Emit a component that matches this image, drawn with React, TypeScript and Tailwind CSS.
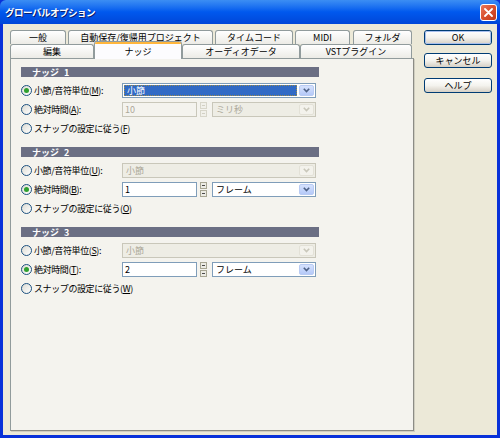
import React from "react";

const font = "font-['Noto_Sans_CJK_JP','Noto_Sans',sans-serif]";

function Radio({ checked }: { checked?: boolean }) {
  return (
    <span className="flex h-[11px] w-[11px] shrink-0 items-center justify-center rounded-full border border-[#1C5180] bg-linear-to-br from-[#DCDBD3] to-white">
      {checked && <span className="h-[5px] w-[5px] rounded-full bg-[#2FA12F]" />}
    </span>
  );
}

function Chevron({ disabled }: { disabled?: boolean }) {
  return (
    <svg width="7" height="5" viewBox="0 0 7 5">
      <path
        d="M0.8 0.8 L3.5 3.6 L6.2 0.8"
        fill="none"
        stroke={disabled ? "#C9C7BA" : "#4D6185"}
        strokeWidth="1.6"
      />
    </svg>
  );
}

function Select({
  value,
  width,
  disabled,
  focused,
}: {
  value: string;
  width: string;
  disabled?: boolean;
  focused?: boolean;
}) {
  return (
    <div
      className={`flex h-[15px] border ${width} ${
        disabled ? "border-[#C9C7BA] bg-[#EEEDE5]" : "border-[#7F9DB9] bg-white"
      }`}
    >
      <div className="flex flex-1 p-[1px]">
        <div
          className={`flex flex-1 items-center pl-[2px] text-[9px] leading-none ${
            focused
              ? "border border-dotted border-[#9C8B4A] bg-[#316AC5] text-white"
              : disabled
              ? "text-[#ACA899]"
              : "text-black"
          }`}
        >
          {value}
        </div>
      </div>
      <div
        className={`m-[1px] flex w-[15px] items-center justify-center rounded-[2px] border ${
          disabled
            ? "border-[#E3E1D7] bg-[#F3F2EC]"
            : "border-[#B9CBF3] bg-linear-to-b from-[#D6E2FD] to-[#B5C9F8]"
        }`}
      >
        <Chevron disabled={disabled} />
      </div>
    </div>
  );
}

function TextBox({ value, disabled }: { value: string; disabled?: boolean }) {
  return (
    <div
      className={`flex h-[15px] w-[75px] items-center border pl-[2px] text-[9px] leading-none ${
        disabled
          ? "border-[#C9C7BA] bg-[#F4F3EE] text-[#ACA899]"
          : "border-[#7F9DB9] bg-white text-black"
      }`}
    >
      {value}
    </div>
  );
}

function Spinner({ disabled }: { disabled?: boolean }) {
  const box = `flex h-[7px] w-[7px] items-center justify-center border ${
    disabled ? "border-[#D8D6CA] bg-[#F1F0EA]" : "border-[#A8A693] bg-[#ECEBE4]"
  }`;
  const mark = disabled ? "bg-[#D2D0C4]" : "bg-[#4A4A4A]";
  return (
    <div className="ml-[3px] flex flex-col gap-[1px]">
      <div className={box}>
        <span className={`h-[1px] w-[3px] ${mark}`} />
      </div>
      <div className={box}>
        <span className={`h-[1px] w-[3px] ${mark}`} />
      </div>
    </div>
  );
}

function Label({ text, k, tail }: { text: string; k: string; tail: string }) {
  return (
    <span className="ml-[2px] whitespace-nowrap text-[9px] leading-none tracking-[-0.4px] text-black">
      {text}(<u>{k}</u>){tail}
    </span>
  );
}

type NudgeProps = {
  n: number;
  keys: [string, string, string];
  unitDisabled?: boolean;
  unitFocused?: boolean;
  timeDisabled?: boolean;
  timeValue: string;
  timeUnit: string;
};

function NudgeSection({ n, keys, unitDisabled, unitFocused, timeDisabled, timeValue, timeUnit }: NudgeProps) {
  return (
    <div className="flex w-[298px] flex-col">
      <div className="flex h-[10px] items-center gap-[5px] bg-[#6B6F84] pl-[11px] text-[9px] font-bold leading-none text-white">
        <span>ナッジ</span>
        <span>{n}</span>
      </div>
      <div className="flex flex-col gap-[4px] pt-[6px]">
        <div className="flex h-[15px] items-center">
          <div className="flex w-[101px] items-center">
            <Radio checked={!unitDisabled} />
            <Label text="小節/音符単位" k={keys[0]} tail=":" />
          </div>
          <Select value="小節" width="w-[194px]" disabled={unitDisabled} focused={unitFocused} />
        </div>
        <div className="flex h-[15px] items-center">
          <div className="flex w-[101px] items-center">
            <Radio checked={!timeDisabled} />
            <Label text="絶対時間" k={keys[1]} tail=":" />
          </div>
          <TextBox value={timeValue} disabled={timeDisabled} />
          <Spinner disabled={timeDisabled} />
          <div className="ml-[5px]">
            <Select value={timeUnit} width="w-[104px]" disabled={timeDisabled} />
          </div>
        </div>
        <div className="flex h-[15px] items-center">
          <Radio />
          <Label text="スナップの設定に従う" k={keys[2]} tail="" />
        </div>
      </div>
    </div>
  );
}

function Tab({ label, width }: { label: string; width: string }) {
  return (
    <div
      className={`flex h-[14px] items-center justify-center rounded-t-[3px] border border-b-0 border-[#919B9C] bg-linear-to-b from-white to-[#ECEBE6] text-[9px] leading-none text-black ${width}`}
    >
      {label}
    </div>
  );
}

function Button({ label, isDefault }: { label: string; isDefault?: boolean }) {
  return (
    <div className="h-[15px] w-[68px] rounded-[3px] border border-[#003C74] bg-linear-to-b from-white via-[#F4F3EE] to-[#D6D0C5]">
      <div
        className={`flex h-full items-center justify-center rounded-[2px] text-[9px] leading-none text-black ${
          isDefault ? "border border-[#A8C0EE]" : ""
        }`}
      >
        {label}
      </div>
    </div>
  );
}

export default function App() {
  return (
    <div className={`flex h-[438px] w-[500px] flex-col bg-[#0831D9] ${font}`}>
      {/* Title bar */}
      <div className="flex h-[24px] items-center justify-between rounded-t-[6px] bg-linear-to-b from-[#3C8EF3] via-[#0058EE] to-[#0046D8] pl-[5px] pr-[3px]">
        <span className="text-[9.5px] font-bold tracking-[-0.5px] text-white [text-shadow:1px_1px_0_#0A1E6E]">
          グローバルオプション
        </span>
        <div className="flex h-[17px] w-[17px] items-center justify-center rounded-[3px] border border-white bg-linear-to-br from-[#E8775A] via-[#D9502D] to-[#C03A18]">
          <svg width="9" height="9" viewBox="0 0 9 9">
            <path d="M1 1 L8 8 M8 1 L1 8" stroke="white" strokeWidth="1.8" strokeLinecap="round" />
          </svg>
        </div>
      </div>

      {/* Body */}
      <div className="mx-[3px] mb-[3px] flex flex-1 bg-[#ECE9D8] pl-[7px] pt-[6px]">
        <div className="flex w-[404px] flex-col pb-[4px]">
          <div className="flex gap-[2px]">
            <Tab label="一般" width="w-[56px]" />
            <Tab label="自動保存/復帰用プロジェクト" width="w-[145px]" />
            <Tab label="タイムコード" width="w-[78px]" />
            <Tab label="MIDI" width="w-[55px]" />
            <div className="ml-[1px]">
              <Tab label="フォルダ" width="w-[59px]" />
            </div>
          </div>
          <div className="relative z-10 flex h-[14px] items-end">
            <Tab label="編集" width="w-[84px]" />
            <div className="-mb-[1px] flex h-[18px] w-[88px] flex-col rounded-t-[3px] border border-b-0 border-[#919B9C] bg-[#FCFCFE]">
              <div className="h-[2px] rounded-t-[2px] bg-[#FFB63C]" />
              <div className="flex flex-1 items-center justify-center text-[9px] leading-none text-black">
                ナッジ
              </div>
            </div>
            <Tab label="オーディオデータ" width="w-[118px]" />
            <Tab label="VSTプラグイン" width="w-[112px]" />
          </div>
          <div className="flex flex-1 flex-col gap-[11px] border border-[#919B9C] border-r-[#8C8C85] border-b-[#8C8C85] bg-[#F4F3EE] pl-[10px] pt-[8px] shadow-[1px_1px_0_#D0CEC0]">
            <NudgeSection n={1} keys={["M", "A", "F"]} unitFocused timeDisabled timeValue="10" timeUnit="ミリ秒" />
            <NudgeSection n={2} keys={["U", "B", "O"]} unitDisabled timeValue="1" timeUnit="フレーム" />
            <NudgeSection n={3} keys={["S", "T", "W"]} unitDisabled timeValue="2" timeUnit="フレーム" />
          </div>
        </div>

        <div className="ml-[10px] flex flex-col gap-[8px]">
          <Button label="OK" isDefault />
          <Button label="キャンセル" />
          <div className="mt-[2px]">
            <Button label="ヘルプ" />
          </div>
        </div>
      </div>
    </div>
  );
}
